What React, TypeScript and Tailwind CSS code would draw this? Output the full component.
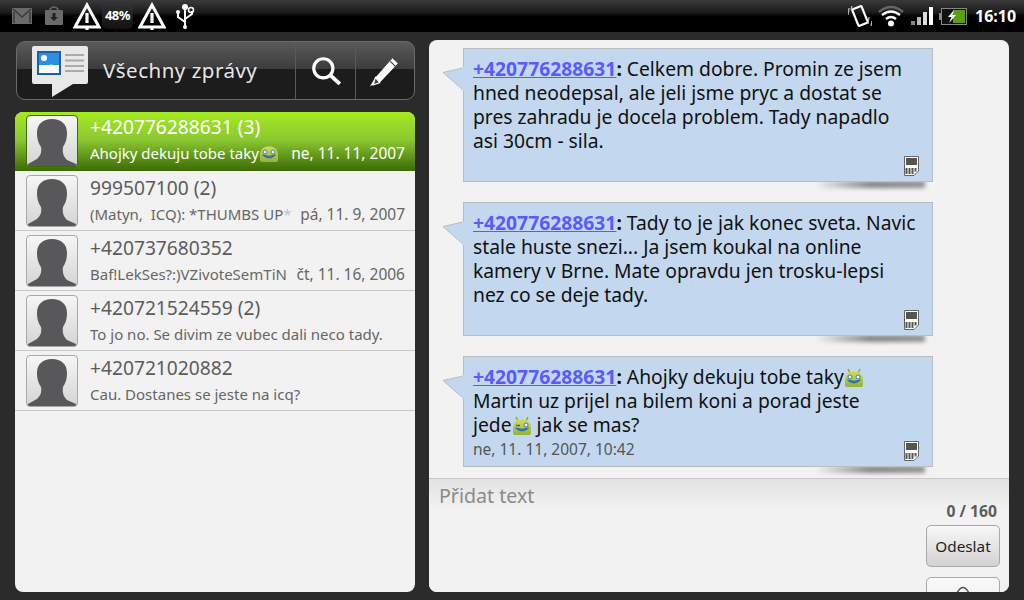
import type { ReactNode } from "react";

const threads = [
  { name: "+420776288631 (3)", text: "Ahojky dekuju tobe taky", date: "ne, 11. 11, 2007", active: true, smile: true },
  { name: "999507100 (2)", text: "(Matyn,  ICQ): *THUMBS UP", fade: "*", date: "pá, 11. 9, 2007" },
  { name: "+420737680352", text: "Baf!LekSes?:)VZivoteSemTiN", date: "čt, 11. 16, 2006" },
  { name: "+420721524559 (2)", text: "To jo no. Se divim ze vubec dali neco tady." },
  { name: "+420721020882", text: "Cau. Dostanes se jeste na icq?" },
];

function Warning({ size = 28 }: { size?: number }) {
  return (
    <svg width={size} height={size} viewBox="0 0 28 28" className="shrink-0">
      <path d="M14 3 L2 25 H26 Z" fill="none" stroke="#fff" strokeWidth="3" strokeLinejoin="miter" />
      <rect x="12.4" y="11" width="3.2" height="10" fill="#fff" />
      <rect x="12.4" y="24" width="3.2" height="4" fill="#fff" />
    </svg>
  );
}

function Droid({ wink }: { wink?: boolean }) {
  return (
    <svg width="20" height="20" viewBox="0 0 20 20" className="inline-block align-[-4px]">
      <defs>
        <linearGradient id="droid" x1="0" y1="0" x2="0" y2="1">
          <stop offset="0" stopColor="#d2dc5a" />
          <stop offset="1" stopColor="#93b23a" />
        </linearGradient>
      </defs>
      <path d="M4 1 L6 5 M16 1 L14 5" stroke="#8aa83a" strokeWidth="1.5" />
      <path d="M1 12 C1 6 5 3.500 10 3.500 C15 3.500 19 6 19 12 V17 Q19 19 17 19 H3 Q1 19 1 17 Z" fill="url(#droid)" />
      {wink ? (
        <path d="M4 9.500 L8 9.500" stroke="#3d6a8c" strokeWidth="1.5" />
      ) : (
        <circle cx="6" cy="9" r="2" fill="#eef4f4" stroke="#3f7fb0" />
      )}
      <circle cx="14" cy="9" r="2" fill="#eef4f4" stroke="#3f7fb0" />
      <path d="M3.500 12 Q10 18 16.500 12 Q10 14.500 3.500 12 Z" fill="#2f6fb0" stroke="#2f6fb0" />
    </svg>
  );
}

function Avatar({ active }: { active?: boolean }) {
  return (
    <div
      className={`w-[52px] h-[52px] shrink-0 rounded-[4px] border bg-gradient-to-b from-[#f6f6f6] to-[#d4d4d4] overflow-hidden ${
        active ? "border-[#3f6a08]" : "border-[#a8a8a8]"
      }`}
    >
      <svg width="50" height="50" viewBox="0 0 50 50">
        <path
          d="M25 3 C16 3 10 8 10 17 C10 24 12 28 14 31 C15 37 13 40 10 43 L1 48 V50 H49 V48 L40 44 C37 41 35 37 36 31 C38 28 40 24 40 17 C40 8 34 3 25 3 Z"
          fill="#58585a"
        />
      </svg>
    </div>
  );
}

function SimIcon() {
  return (
    <svg width="15" height="20" viewBox="0 0 15 20" className="shrink-0">
      <path d="M0.500 0.500 H14.500 V15 L10 19.500 H0.500 Z" fill="#fff" stroke="#666" />
      <rect x="2" y="2" width="11" height="7" fill="#555" />
      <path d="M2.500 12 V18 M5.500 12 V18 M8.500 12 V18 M11.500 12 V15.500" stroke="#555" strokeWidth="2" />
    </svg>
  );
}

function Bubble({ children, date, height }: { children: ReactNode; date?: string; height: string }) {
  return (
    <div className={`relative ml-[34px] w-[470px] ${height} mb-[20px] last:mb-0`}>
      <div className="absolute bottom-[-6px] right-[8px] w-[110px] h-[7px] bg-gradient-to-r from-transparent via-[#555] to-[#666] opacity-70 blur-[2px]" />
      <svg width="22" height="32" viewBox="0 0 22 32" className="absolute left-[-21px] top-[19px] z-10">
        <path d="M21 1 L1 5.500 L21 23" fill="#c3d8ee" stroke="#b9bdc0" />
        <path d="M21 0 V24" stroke="#c3d8ee" strokeWidth="2" />
      </svg>
      <div className="relative h-full bg-[#c3d8ee] border border-[#b9bdc0] pl-[9px] pr-[8px] pt-[8px] text-[19.300px] leading-[24px] text-[#111] whitespace-nowrap">
        {children}
        {date && <div className="text-[15.500px] leading-[20px] mt-[2px] text-[#555]">{date}</div>}
        <div className="absolute right-[13px] bottom-[5px]">
          <SimIcon />
        </div>
      </div>
    </div>
  );
}

function Sender() {
  return (
    <span className="font-bold">
      <span className="text-[#5a5aff] underline">+420776288631</span>:
    </span>
  );
}

export default function App() {
  return (
    <div
      className="w-[1024px] h-[600px] overflow-hidden bg-[#2b2b2b] flex flex-col"
      style={{ fontFamily: '"Noto Sans", "Open Sans", sans-serif' }}
    >
      <div className="h-[32px] shrink-0 flex items-center justify-between bg-gradient-to-b from-[#3a3a3a] via-[#1a1a1a] via-40% to-black to-60% pl-[12px] pr-[7px]">
        <div className="flex items-center">
          <svg width="20" height="16" viewBox="0 0 20 16" className="shrink-0">
            <rect x="0" y="0" width="20" height="16" fill="#6a6a6a" />
            <path d="M1 1 L10 9 L19 1 M2 15 V4 M18 15 V4" stroke="#3a3a3a" strokeWidth="1.500" fill="none" />
          </svg>
          <svg width="18" height="20" viewBox="0 0 18 20" className="ml-[13px] shrink-0">
            <path d="M5 5 V3 Q9 -1 13 3 V5" stroke="#6a6a6a" strokeWidth="1.500" fill="none" />
            <rect x="0" y="4" width="18" height="15" rx="1" fill="#6a6a6a" />
            <path d="M7.500 7 H10.500 V11 H13 L9 15 L5 11 H7.500 Z" fill="#222" />
          </svg>
          <div className="ml-[10px]"><Warning /></div>
          <div className="w-[31px] h-[26px] ml-[1px] rounded-[5px] bg-gradient-to-b from-[#333] to-[#111] text-white text-[13px] font-bold tracking-[-0.5px] flex items-center justify-center">48%</div>
          <div className="ml-[5px]"><Warning /></div>
          <svg width="20" height="26" viewBox="0 0 20 26" className="ml-[9px] shrink-0">
            <path d="M10 4 V24 M10 19 L3 14 V10 M10 16 L17 11 V8" stroke="#fff" strokeWidth="2" fill="none" />
            <circle cx="10" cy="4" r="3" fill="#fff" />
            <circle cx="3" cy="9" r="2" fill="#fff" />
            <circle cx="16" cy="7" r="2.500" fill="none" stroke="#fff" strokeWidth="1.500" />
            <circle cx="10" cy="24" r="2" fill="#fff" />
          </svg>
        </div>
        <div className="flex items-center">
          <svg width="24" height="26" viewBox="0 0 24 26" className="shrink-0">
            <rect x="7" y="4" width="10" height="18" rx="1" transform="rotate(-22 12 13)" fill="none" stroke="#fff" strokeWidth="2.200" />
            <path d="M1 5 L0 12 M4 3 L3 7 M21 14 L20 21 M24 18 L23 23" stroke="#bbb" strokeWidth="1.300" />
          </svg>
          <svg width="26" height="22" viewBox="0 0 26 22" className="ml-[6px] shrink-0">
            <path d="M1 7 Q13 -3 25 7" stroke="#666" strokeWidth="2.500" fill="none" />
            <path d="M4 10 Q13 3 22 10" stroke="#fff" strokeWidth="2.500" fill="none" />
            <path d="M8 14 Q13 10 18 14" stroke="#fff" strokeWidth="2.500" fill="none" />
            <circle cx="13" cy="18.500" r="3" fill="#fff" />
          </svg>
          <svg width="23" height="18" viewBox="0 0 23 18" className="ml-[7px] shrink-0">
            <rect x="0" y="14" width="4" height="4" fill="#888" />
            <rect x="6" y="10" width="4" height="8" fill="#bbb" />
            <rect x="12" y="5" width="4" height="13" fill="#ddd" />
            <rect x="18" y="0" width="4" height="18" fill="#fff" />
          </svg>
          <svg width="28" height="17" viewBox="0 0 28 17" className="ml-[5px] shrink-0">
            <rect x="0" y="5" width="2" height="7" fill="#888" />
            <rect x="2.500" y="0.500" width="25" height="16" fill="#111" stroke="#888" />
            <rect x="14" y="2" width="12" height="13" fill="#5aa010" />
            <path d="M15 2 L9 9 H12.500 L10 15 L17 7 H13.500 Z" fill="#fff" />
          </svg>
          <span className="ml-[8px] text-white font-bold text-[16px] w-[42px]">16:10</span>
        </div>
      </div>

      <div className="flex-1 flex pl-[15px] pt-[8px] pb-[8px] min-h-0">
        <div className="w-[400px] shrink-0 flex flex-col">
          <div className="ml-[1px] mt-[1px] h-[59px] shrink-0 rounded-[9px] border border-[#6a6a6a] overflow-hidden flex items-stretch bg-gradient-to-b from-[#5a5a5a] from-0% via-[#3c3c3c] via-48% to-[#1c1c1c] to-48%">
            <div className="w-[279px] flex items-center pl-[14px] border-r border-[#5a5a5a]">
              <svg width="58" height="54" viewBox="0 0 58 54" className="shrink-0 mt-[3px]">
                <path d="M3 1 H55 Q57 1 57 3 V37 Q57 39 55 39 H42 L21 52 V39 H3 Q1 39 1 37 V3 Q1 1 3 1 Z" fill="#e8e8e8" />
                <rect x="6" y="6" width="24" height="24" fill="#1b5eb0" />
                <rect x="8" y="8" width="20" height="20" fill="#eef3f8" />
                <rect x="8" y="8" width="20" height="12" fill="#2c8fe0" />
                <circle cx="13" cy="13" r="3" fill="#fff" />
                <path d="M8 28 Q12 18 17 22 Q21 15 28 28 Z" fill="#fff" />
                <path d="M34 10 H53 M34 15.500 H53 M34 21 H53 M34 26 H53" stroke="#aaa" strokeWidth="2" />
              </svg>
              <span className="ml-[14px] text-[#e6e6e6] text-[20.500px] tracking-[0.5px]">Všechny zprávy</span>
            </div>
            <div className="w-[60px] flex items-center justify-center border-r border-[#5a5a5a]">
              <svg width="32" height="32" viewBox="0 0 30 30">
                <circle cx="12.500" cy="12.500" r="9" fill="none" stroke="#fff" strokeWidth="3" />
                <path d="M19 19 L28 27" stroke="#fff" strokeWidth="3.500" />
              </svg>
            </div>
            <div className="flex-1 flex items-center justify-center">
              <svg width="32" height="32" viewBox="0 0 30 30">
                <path d="M6 21 L22 3 L27 8 L10 26 L1 29 Z" fill="#fff" />
                <path d="M20 6 L25 11" stroke="#333" strokeWidth="1" />
                <path d="M6 21 L10 26 L4 28 Z" fill="#444" stroke="#fff" strokeWidth="1" />
              </svg>
            </div>
          </div>

          <div className="mt-[12px] flex-1 rounded-[8px] bg-[#f2f2f2] overflow-hidden">
            {threads.map((t) => (
              <div
                key={t.name}
                className={`h-[60px] first:h-[59px] flex items-center pl-[11px] pr-[10px] border-b ${
                  t.active
                    ? "bg-gradient-to-b from-[#a4ea1f] from-0% via-[#8cc832] via-48% to-[#3f6e06] to-100% border-[#3f6a08]"
                    : "border-[#c8c8c8]"
                }`}
              >
                <Avatar active={t.active} />
                <div className={`ml-[12px] flex-1 min-w-0 ${t.active ? "pb-[3px]" : ""}`}>
                  <div className={`text-[19.200px] leading-[24px] whitespace-nowrap ${t.active ? "text-white" : "text-[#5c5c5c]"}`}>{t.name}</div>
                  <div className="flex justify-between items-center text-[15px] leading-[22px] mt-[3px]">
                    <span className={`whitespace-pre overflow-hidden ${t.active ? "text-white" : "text-[#666]"}`}>
                      {t.text}
                      {t.smile && <Droid />}
                      {t.fade && <span className="text-[#c4c4c4]">{t.fade}</span>}
                    </span>
                    {t.date && <span className={`whitespace-nowrap ml-[8px] text-[15.500px] ${t.active ? "text-white" : "text-[#666]"}`}>{t.date}</span>}
                  </div>
                </div>
              </div>
            ))}
          </div>
        </div>

        <div className="ml-[14px] w-[580px] shrink-0 rounded-[8px] bg-[#f2f2f2] overflow-hidden flex flex-col">
          <div className="h-[439px] shrink-0 pt-[8px] border-b border-[#c8c8c8]">
            <Bubble height="h-[134px]">
              <Sender /> Celkem dobre. Promin ze jsem
              <br />
              hned neodepsal, ale jeli jsme pryc a dostat se
              <br />
              pres zahradu je docela problem. Tady napadlo
              <br />
              asi 30cm - sila.
            </Bubble>
            <Bubble height="h-[134px]">
              <Sender /> Tady to je jak konec sveta. Navic
              <br />
              stale huste snezi... Ja jsem koukal na online
              <br />
              kamery v Brne. Mate opravdu jen trosku-lepsi
              <br />
              nez co se deje tady.
            </Bubble>
            <Bubble height="h-[111px]" date="ne, 11. 11, 2007, 10:42">
              <Sender /> Ahojky dekuju tobe taky<Droid />
              <br />
              Martin uz prijel na bilem koni a porad jeste
              <br />
              jede<Droid wink /> jak se mas?
            </Bubble>
          </div>
          <div className="flex-1 bg-gradient-to-b from-[#e2e2e2] from-0% to-[#f2f2f2] to-[30px] pl-[10px] pr-[9px] pt-[4px] flex flex-col min-h-0">
            <div className="text-[19.600px] leading-[26px] text-[#8a8a8a]">Přidat text</div>
            <div className="self-end mt-[-8px] mr-[3px] text-[15.700px] leading-[20px] font-bold text-[#5c5c5c]">0 / 160</div>
            <button className="self-end mt-[4px] w-[74px] h-[42px] shrink-0 rounded-[5px] border border-[#a8a8a8] bg-gradient-to-b from-[#f8f8f8] to-[#d2d2d2] text-[15.300px] text-[#222]">
              Odeslat
            </button>
            <div className="self-end mt-[10px] w-[74px] h-[30px] shrink-0 rounded-[5px] border border-[#a8a8a8] bg-gradient-to-b from-[#fafafa] to-[#eee] flex justify-center pt-[7px]">
              <svg width="16" height="8" viewBox="0 0 16 8">
                <path d="M2 8 Q8 -3 14 8" fill="none" stroke="#555" strokeWidth="1.500" />
              </svg>
            </div>
          </div>
        </div>
      </div>
    </div>
  );
}
